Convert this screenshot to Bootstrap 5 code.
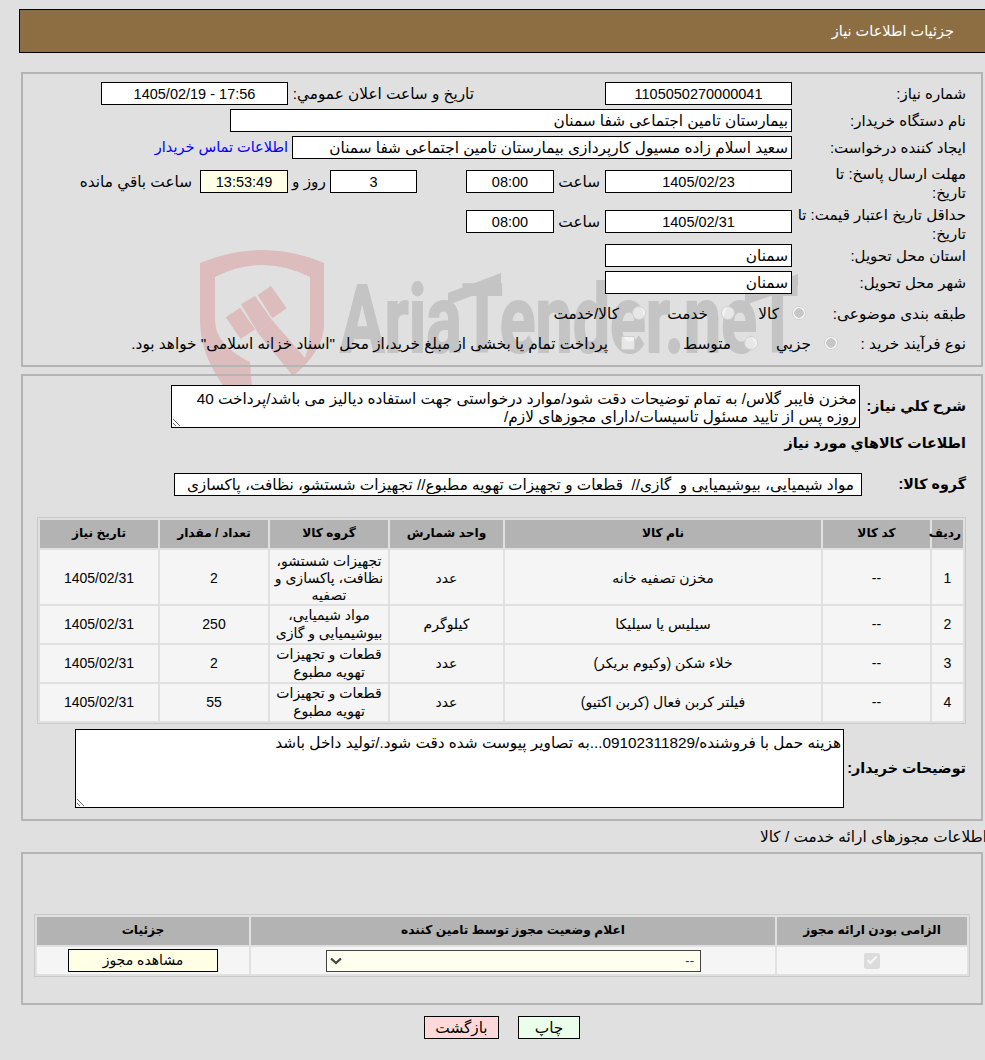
<!DOCTYPE html>
<html lang="fa" dir="rtl">
<head>
<meta charset="utf-8">
<title>جزئیات اطلاعات نیاز</title>
<link rel="stylesheet" href="https://cdn.jsdelivr.net/npm/bootstrap@5.3.0/dist/css/bootstrap.min.css">
<style>
body{background:#e0e0e0;color:#000;font-family:"Liberation Sans","DejaVu Sans",sans-serif;font-size:15.3px;line-height:23px;padding:9px 0 20px;overflow-x:hidden}
.wm{position:absolute;left:0;top:0;z-index:-1}
.page-head{height:44px;margin-left:19px;margin-right:-1px;background:#8d6e42;border:1px solid #000;color:#fff;padding-right:31px;font-size:14.5px}
.sec-box{border:2px solid #b4b4b4;margin:0 2px 0 21px}
.box-a{height:295px;margin-top:19px;padding:8px 15px 0 0}
.box-b{height:447px;margin-top:7px;padding:9px 15px 0 0}
.box-c{height:153px;padding-top:60px;padding-right:11px}
.f-row{display:flex;align-items:flex-start}
.h27{height:27px}.h28{height:28px}.h41{height:41px}.h39{height:39px}.h30{height:30px}
.f-lab{width:174px;flex:none;font-size:15px}
.f-lab.two{line-height:19px}
.fbox.form-control{height:23px;min-height:0;border:1px solid #000;border-radius:0;background:#fff;font:inherit;line-height:21px;padding:0 3px;color:#000;flex:none;box-shadow:none}
.fbox.num.form-control{font-size:14.5px}
.w187{width:187px}.w562{width:562px}.w500{width:500px}.w88{width:88px}
.gap131{margin-left:131px}
.lab186{width:186px;flex:none}
.mt6{margin-top:6px}.mt5{margin-top:5px}
.unit{width:51px;flex:none;padding-right:5px}
.timebox.form-control{background:#ffffe6}
.days{margin-right:49px}
.w87{width:87px}
.day-lab{width:42px;white-space:nowrap;text-align:center}
.rnd{appearance:none;-webkit-appearance:none;flex:none;width:14px;height:14px;margin:0;border:1px solid #d0d0d0;border-radius:50%;background:rgba(255,255,255,.6)}
.rnd:checked{background:radial-gradient(circle,#c6c6c6 0 4.5px,rgba(255,255,255,.85) 5px)}
.sqr{border-radius:2px}
.opt{display:flex;align-items:flex-start;flex:none;gap:13px}
.opt .rnd{margin-top:4px}
.opt span{white-space:nowrap}
.lab160{width:160px;flex:none}.lab128{width:128px;flex:none}
.w71{width:71px}.w89{width:89px}.w80{width:80px}.w123{width:123px}
a.contact{color:#00f;text-decoration:none;margin-right:4px;font-size:14.5px}
.b-lab{font-weight:700;flex:none;font-size:14.3px}
.note.form-control{border:1px solid #000;border-radius:0;background:#fff;font:inherit;line-height:18px;padding:4px 2px 2px;color:#000;box-shadow:none;min-height:0;overflow:hidden}
.note1{width:689px;height:43px;margin-right:7px}
.note2{width:769px;height:79px}
.lab-note{width:122px;white-space:nowrap}
.lab-group{width:104px;line-height:23px}
.head-b{font-weight:700;font-size:14.3px;height:41px;margin-top:4px;line-height:22px}
.grp.form-control{width:688px;padding-right:7px}
.grid-t.table{table-layout:fixed;border-collapse:separate;border-spacing:2px;border:1px solid #c9c9c9;margin:0;--bs-table-bg:#f5f5f5;--bs-table-color:#000;line-height:17.5px}
.grid-t.table>*>tr>*{border:0;padding:0 2px;text-align:center;vertical-align:middle;font-size:14px;box-shadow:none;background:#f5f5f5}
.grid-t.table>thead>tr>th{background:#b3b3b3;height:28px;font-weight:700;font-size:12.2px}
.grid-t.table>tbody>tr.tr-3>td{padding-top:2px;line-height:17px}
.t1{width:929px;margin-top:21px!important}
.t2{width:932px}
.tr-3{height:54px}.tr-2{height:37px}.tr-c{height:27px}
.row-note{margin-top:5px;align-items:center}
.lic-title{height:30px;margin-top:1px;margin-right:-2px;line-height:30px;white-space:nowrap}
.chk{appearance:none;-webkit-appearance:none;display:inline-block;width:16px;height:16px;border-radius:2px;background:#dcdcdc;vertical-align:middle;margin:0}
.chk-wrap{display:inline-block;position:relative;width:16px;height:16px}
.chk-wrap svg{position:absolute;left:2px;top:3px}
.sel.form-select{width:375px;height:22px;min-height:0;padding:0 6px 0 24px;border:1px solid #444;border-radius:0;background-color:#fffff0;background-image:url("data:image/svg+xml,%3csvg xmlns='http://www.w3.org/2000/svg' viewBox='0 0 12 8'%3e%3cpath fill='none' stroke='%23444' stroke-width='2.200' d='M1 1.500l5 4.500 5-4.500'/%3e%3c/svg%3e");background-position:left 3px center;background-size:12px 8px;font:inherit;font-size:13px;line-height:20px;box-shadow:none;color:#333;direction:rtl;display:block;margin-right:72px}
.btn-lic.btn,.btn-act.btn{font:inherit;line-height:21px;padding:0;border:1px solid #000;border-radius:0;color:#000;height:23px}
.btn-lic.btn{width:150px;background:#ffffe6;display:block;margin:0 auto 0 29px}
.actions{gap:19px;margin-top:11px;margin-left:19px}
.btn-back.btn{width:75px;background:#ffd9d9}
.btn-print.btn{width:62px;background:#e9ffe9}
</style>
</head>
<body>
<svg class="wm" width="985" height="400" viewBox="0 0 985 400" aria-hidden="true">
  <g fill="#dcbcbc">
    <path fill-rule="evenodd" d="M200 263Q232 250 262 250Q294 250 324 263V325Q324 350 293 376L258 333 272 320 305 358Q310 345 310 325V277Q286 265 262 265Q238 265 215 277V320Q215 345 250 362L252 388H225Q200 355 200 320Z"/>
    <path d="M225.7 317.3 240 307.700 255 329.300 240.700 339Z"/>
    <path d="M241 304.300 255 296 272 320 258 333Z"/>
    <path d="M257.700 295 271 286 286.700 308.300 272.300 318.300Z"/>
  </g>
  <text x="340" y="352" font-family="Roboto, sans-serif" font-weight="700" font-size="94" fill="#c4c4c4" stroke="#c4c4c4" stroke-width="2" textLength="458" lengthAdjust="spacingAndGlyphs" direction="ltr" unicode-bidi="embed">AriaTender.neT</text>
  <path fill="#c4c4c4" d="M448 293 501 273V285L448 305ZM745 293 798 274V286L745 305Z"/>
</svg>

<header class="page-head d-flex align-items-center">جزئیات اطلاعات نیاز</header>

<section class="sec-box box-a">
  <div class="f-row h27">
    <span class="f-lab">شماره نیاز:</span>
    <input class="form-control fbox num w187 text-center gap131" readonly value="1105050270000041">
    <span class="lab186">تاریخ و ساعت اعلان عمومي:</span>
    <input class="form-control fbox num w187 text-center" readonly value="17:56 - 1405/02/19">
  </div>
  <div class="f-row h27">
    <span class="f-lab">نام دستگاه خریدار:</span>
    <input class="form-control fbox w562" readonly value="بیمارستان تامین اجتماعی شفا سمنان">
  </div>
  <div class="f-row h28">
    <span class="f-lab">ایجاد کننده درخواست:</span>
    <input class="form-control fbox w500" readonly value="سعید اسلام زاده مسیول کارپردازی بیمارستان تامین اجتماعی شفا سمنان">
    <a class="contact" href="#">اطلاعات تماس خریدار</a>
  </div>
  <div class="f-row h41">
    <span class="f-lab two">مهلت ارسال پاسخ: تا<br>تاریخ:</span>
    <input class="form-control fbox num w187 text-center mt6" readonly value="1405/02/23">
    <span class="unit mt6">ساعت</span>
    <input class="form-control fbox num w88 text-center mt6" readonly value="08:00">
    <input class="form-control fbox num w87 text-center mt6 days" readonly value="3">
    <span class="mt6 day-lab">روز و</span>
    <input class="form-control fbox num timebox w88 text-center mt6" readonly value="13:53:49">
    <span class="mt6 pe-2 text-nowrap">ساعت باقي مانده</span>
  </div>
  <div class="f-row h39">
    <span class="f-lab two">حداقل تاریخ اعتبار قیمت: تا<br>تاریخ:</span>
    <input class="form-control fbox num w187 text-center mt5" readonly value="1405/02/31">
    <span class="unit mt5">ساعت</span>
    <input class="form-control fbox num w88 text-center mt5" readonly value="08:00">
  </div>
  <div class="f-row h27">
    <span class="f-lab">استان محل تحویل:</span>
    <input class="form-control fbox w187" readonly value="سمنان">
  </div>
  <div class="f-row h27">
    <span class="f-lab">شهر محل تحویل:</span>
    <input class="form-control fbox w187" readonly value="سمنان">
  </div>
  <div class="f-row h30 pt-1">
    <span class="lab160">طبقه بندی موضوعی:</span>
    <label class="opt w71"><input class="rnd" type="radio" name="a" checked disabled><span>كالا</span></label>
    <label class="opt w89"><input class="rnd" type="radio" name="a" disabled><span>خدمت</span></label>
    <label class="opt"><input class="rnd" type="radio" name="a" disabled><span>كالا/خدمت</span></label>
  </div>
  <div class="f-row h30 pt-1">
    <span class="lab128">نوع فرآیند خرید :</span>
    <label class="opt w80"><input class="rnd" type="radio" name="b" checked disabled><span>جزیي</span></label>
    <label class="opt w123"><input class="rnd" type="radio" name="b" disabled><span>متوسط</span></label>
    <label class="opt"><input class="rnd sqr" type="checkbox" disabled><span>پرداخت تمام یا بخشی از مبلغ خرید،از محل "اسناد خزانه اسلامی" خواهد بود.</span></label>
  </div>
</section>

<section class="sec-box box-b">
  <div class="f-row align-items-center">
    <span class="b-lab">شرح کلي نیاز:</span>
    <textarea class="form-control note note1" readonly>مخزن فایبر گلاس/ به تمام توضیحات دقت شود/موارد درخواستی جهت استفاده دیالیز می باشد/پرداخت 40 روزه پس از تایید مسئول تاسیسات/دارای مجوزهای لازم/</textarea>
  </div>
  <div class="head-b">اطلاعات کالاهاي مورد نیاز</div>
  <div class="f-row">
    <span class="b-lab lab-group">گروه کالا:</span>
    <input class="form-control fbox grp" readonly value="مواد شیمیایی، بیوشیمیایی و  گازی//  قطعات و تجهیزات تهویه مطبوع// تجهیزات شستشو، نظافت، پاکسازی">
  </div>
  <table class="table grid-t t1">
    <colgroup><col style="width:31px"><col style="width:107px"><col style="width:316px"><col style="width:113px"><col style="width:118px"><col style="width:108px"><col style="width:118px"></colgroup>
    <thead><tr><th>ردیف</th><th>کد کالا</th><th>نام کالا</th><th>واحد شمارش</th><th>گروه کالا</th><th>تعداد / مقدار</th><th>تاریخ نیاز</th></tr></thead>
    <tbody>
      <tr class="tr-3"><td>1</td><td>--</td><td>مخزن تصفیه خانه</td><td>عدد</td><td>تجهیزات شستشو، نظافت، پاکسازی و تصفیه</td><td>2</td><td>1405/02/31</td></tr>
      <tr class="tr-2"><td>2</td><td>--</td><td>سیلیس یا سیلیکا</td><td>کیلوگرم</td><td>مواد شیمیایی، بیوشیمیایی و گازی</td><td>250</td><td>1405/02/31</td></tr>
      <tr class="tr-2"><td>3</td><td>--</td><td>خلاء شکن (وکیوم بریکر)</td><td>عدد</td><td>قطعات و تجهیزات تهویه مطبوع</td><td>2</td><td>1405/02/31</td></tr>
      <tr class="tr-2"><td>4</td><td>--</td><td>فیلتر کربن فعال (کربن اکتیو)</td><td>عدد</td><td>قطعات و تجهیزات تهویه مطبوع</td><td>55</td><td>1405/02/31</td></tr>
    </tbody>
  </table>
  <div class="f-row row-note">
    <span class="b-lab lab-note">توضیحات خریدار:</span>
    <textarea class="form-control note note2" readonly>هزینه حمل با فروشنده/09102311829...به تصاویر پیوست شده دقت شود./تولید داخل باشد</textarea>
  </div>
</section>

<div class="lic-title">اطلاعات مجوزهای ارائه خدمت / کالا</div>

<section class="sec-box box-c">
  <table class="table grid-t t2">
    <colgroup><col style="width:190px"><col style="width:524px"><col style="width:212px"></colgroup>
    <thead><tr><th>الزامی بودن ارائه مجوز</th><th>اعلام وضعیت مجوز توسط تامین کننده</th><th>جزئیات</th></tr></thead>
    <tbody><tr class="tr-c">
      <td><span class="chk-wrap"><input class="chk" type="checkbox" checked disabled><svg width="12" height="10" viewBox="0 0 12 10" aria-hidden="true"><path d="M1.500 5 4.500 8 10.500 1.500" fill="none" stroke="#f5f5f5" stroke-width="2.200"/></svg></span></td>
      <td><select class="form-select sel" disabled><option>--</option></select></td>
      <td><button class="btn btn-lic" type="button">مشاهده مجوز</button></td>
    </tr></tbody>
  </table>
</section>

<div class="d-flex justify-content-center actions">
  <button class="btn btn-act btn-print" type="button">چاپ</button>
  <button class="btn btn-act btn-back" type="button">بازگشت</button>
</div>
</body>
</html>
